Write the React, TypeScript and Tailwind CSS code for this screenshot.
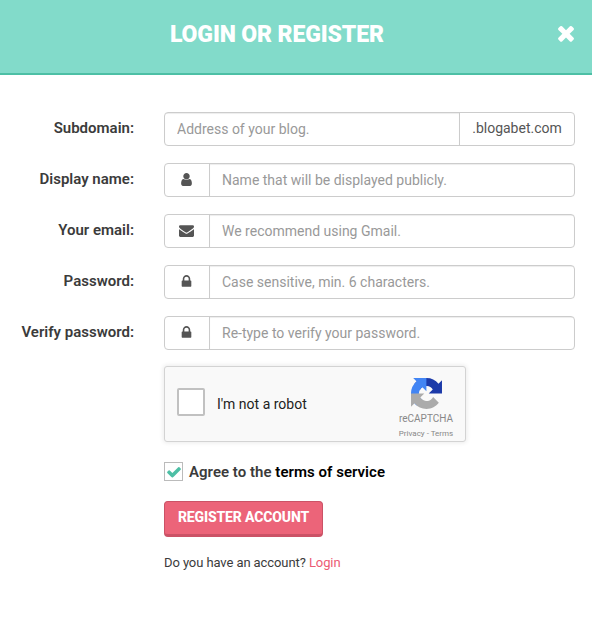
import { useState } from "react";
import clsx from "clsx";

const ICONS = {
	user: "M1536 1399q0 109-62.5 187t-150.5 78h-854q-88 0-150.5-78t-62.5-187q0-85 8.5-160.5t31.5-152 58.5-131 94-89 134.5-34.5q131 128 313 128t313-128q76 0 134.5 34.5t94 89 58.5 131 31.5 152 8.5 160.5zm-256-887q0 159-112.5 271.5t-271.5 112.5-271.5-112.5-112.5-271.5 112.5-271.5 271.5-112.5 271.5 112.5 112.5 271.5z",
	envelope:
		"M1792 710v794q0 66-47 113t-113 47h-1472q-66 0-113-47t-47-113v-794q44 49 101 87 362 246 497 345 57 42 92.5 65.5t94.5 48 110 24.5h2q51 0 110-24.5t94.5-48 92.5-65.5q170-123 498-345 57-39 100-87zm0-294q0 79-49 151t-122 123q-376 261-468 325-10 7-42.5 31t-54 38.5-52 32.5-57.5 27-50 9h-2q-23 0-50-9t-57.5-27-52-32.5-54-38.5-42.5-31q-91-64-262-182.5t-205-142.5q-62-42-117-115.5t-55-136.5q0-78 41.5-130t118.5-52h1472q65 0 112.5 47t47.5 113z",
	lock: "M640 768h512v-192q0-106-75-181t-181-75-181 75-75 181v192zm832 96v576q0 40-28 68t-68 28h-960q-40 0-68-28t-28-68v-576q0-40 28-68t68-28h32v-192q0-184 132-316t316-132 316 132 132 316v192h32q40 0 68 28t28 68z",
	check: "M1671 566q0 40-28 68l-724 724-136 136q-28 28-68 28t-68-28l-136-136-362-362q-28-28-28-68t28-68l136-136q28-28 68-28t68 28l294 295 656-657q28-28 68-28t68 28l136 136q28 28 28 68z",
	times: "M1490 1322q0 40-28 68l-136 136q-28 28-68 28t-68-28l-294-294-294 294q-28 28-68 28t-68-28l-136-136q-28-28-28-68t28-68l294-294-294-294q-28-28-28-68t28-68l136-136q28-28 68-28t68 28l294 294 294-294q28-28 68-28t68 28l136 136q28 28 28 68t-28 68l-294 294 294 294q28 28 28 68z",
};

type IconName = keyof typeof ICONS;

const Icon: React.FC<{ name: IconName; className?: string }> = ({
	name,
	className,
}) => (
	<svg viewBox="0 0 1792 1792" fill="currentColor" className={className}>
		<path d={ICONS[name]} />
	</svg>
);

const Field: React.FC<{
	label: string;
	placeholder: string;
	icon?: IconName;
	suffix?: string;
	type?: string;
}> = ({ label, placeholder, icon, suffix, type = "text" }) => (
	<label className="flex h-[34px]">
		<span className="w-[134px] mr-[30px] text-right text-[15px] leading-8 font-semibold text-[#3b3b3b]">
			{label}
		</span>
		<span className="flex w-[411px] overflow-hidden rounded border border-[#ccc]">
			{icon && (
				<span className="flex w-[45px] shrink-0 justify-center border-r border-[#ccc] pt-2 pr-px text-[#555]">
					<Icon name={icon} className="size-[15px]" />
				</span>
			)}
			<input
				type={type}
				placeholder={placeholder}
				className="min-w-0 flex-1 px-3 text-sm text-[#555] shadow-[inset_0_1px_1px_rgba(0,0,0,0.075)] outline-none placeholder:text-[#999]"
			/>
			{suffix && (
				<span className="w-[115px] border-l border-[#ccc] text-center text-sm leading-[31px] text-[#555]">
					{suffix}
				</span>
			)}
		</span>
	</label>
);

const RecaptchaLogo = () => (
	<svg viewBox="0 0 64 64" className="size-[31px]">
		<path
			fill="#1c3aa9"
			d="M64 31.955a33 33 0 0 0-.037-1.379V4.61l-7.178 7.178A31.93 31.93 0 0 0 32.028.08C21.63.08 12.393 5.044 6.55 12.732l11.766 11.89a15.6 15.6 0 0 1 4.763-5.346c2.053-1.603 4.963-2.913 8.948-2.913.481 0 .853.056 1.126.162 4.937.39 9.217 3.114 11.737 7.07l-8.329 8.329c10.549-.041 22.466-.066 27.439.031"
		/>
		<path
			fill="#4285f4"
			d="M31.862.081a33 33 0 0 0-1.379.037H4.517l7.178 7.178A31.93 31.93 0 0 0-.013 32.053c0 10.398 4.964 19.635 12.652 25.478l11.89-11.766a15.6 15.6 0 0 1-5.346-4.763c-1.603-2.053-2.913-4.963-2.913-8.948 0-.481.056-.853.162-1.126.39-4.937 3.114-9.217 7.07-11.737l8.329 8.329c-.041-10.549-.066-22.466.031-27.439"
		/>
		<path
			fill="#ababab"
			d="M.013 32.045a33 33 0 0 0 .037 1.379V59.39l7.178-7.178A31.93 31.93 0 0 0 31.985 63.92c10.398 0 19.635-4.964 25.478-12.652l-11.766-11.89a15.6 15.6 0 0 1-4.763 5.346c-2.053 1.603-4.963 2.913-8.948 2.913-.481 0-.853-.056-1.126-.162-4.937-.39-9.217-3.114-11.737-7.07l8.329-8.329c-10.549.041-22.466.066-27.439-.031"
		/>
	</svg>
);

const Recaptcha = () => (
	<div className="mt-4 flex h-[76px] w-[302px] items-center rounded-[3px] border border-[#d3d3d3] bg-[#f9f9f9] pl-3 shadow-[0_0_4px_1px_rgba(0,0,0,0.08)]">
		<button
			type="button"
			aria-label="I'm not a robot"
			className="mt-[-4px] size-7 rounded-xs border-2 border-[#c1c1c1] bg-white"
		/>
		<span className="ml-3 text-sm text-[#222]">I'm not a robot</span>
		<div className="mr-2 ml-auto flex w-[62px] flex-col items-center pt-2 text-[#888]">
			<RecaptchaLogo />
			<span className="mt-1 text-[10px] leading-3">reCAPTCHA</span>
			<span className="mt-1 text-[8px] leading-[10px]">Privacy - Terms</span>
		</div>
	</div>
);

export default function App() {
	const [agreed, setAgreed] = useState(true);

	return (
		<div className="min-h-screen bg-white font-[Roboto,sans-serif]">
			<header className="flex h-[75px] items-center justify-between border-b-2 border-[#4dbfa5] bg-[#82dbca] pr-3.5 pb-1 pl-[170px] text-white">
				<h1 className="text-[23px] leading-7 font-black tracking-[-0.13px]">
					LOGIN OR REGISTER
				</h1>
				<button type="button" aria-label="Close" className="pb-1">
					<Icon name="times" className="size-6" />
				</button>
			</header>

			<form className="pt-[37px]">
				<div className="flex flex-col gap-[17px]">
					<Field
						label="Subdomain:"
						placeholder="Address of your blog."
						suffix=".blogabet.com"
					/>
					<Field
						label="Display name:"
						placeholder="Name that will be displayed publicly."
						icon="user"
					/>
					<Field
						label="Your email:"
						placeholder="We recommend using Gmail."
						icon="envelope"
					/>
					<Field
						label="Password:"
						placeholder="Case sensitive, min. 6 characters."
						icon="lock"
						type="password"
					/>
					<Field
						label="Verify password:"
						placeholder="Re-type to verify your password."
						icon="lock"
						type="password"
					/>
				</div>

				<div className="flex flex-col items-start pl-[164px]">
					<Recaptcha />
					<div className="mt-5 flex h-[19px] items-center gap-1.5 text-[15px] leading-[19px] font-semibold tracking-[0.03px] text-[#3b3b3b]">
						<button
							type="button"
							role="checkbox"
							aria-checked={agreed}
							aria-label="Agree to the terms of service"
							onClick={() => setAgreed(!agreed)}
							className="flex size-[19px] items-center justify-center border border-[#bbb]"
						>
							<Icon
								name="check"
								className={clsx("size-4 text-[#4dbfa5]", !agreed && "hidden")}
							/>
						</button>
						<span className="pt-0.5">
							Agree to the <a className="text-black">terms of service</a>
						</span>
					</div>
					<button
						type="button"
						className="mt-5 h-9 w-[159px] rounded border border-b-[3px] border-[#cb5266] bg-[#ec6479] pb-0.5 text-sm leading-[30px] font-extrabold tracking-[-0.15px] text-white"
					>
						REGISTER ACCOUNT
					</button>
					<p className="mt-4 text-[13px] leading-5 tracking-[-0.09px] text-[#3b3b3b]">
						Do you have an account? <a className="text-[#ec5b74]">Login</a>
					</p>
				</div>
			</form>
		</div>
	);
}
